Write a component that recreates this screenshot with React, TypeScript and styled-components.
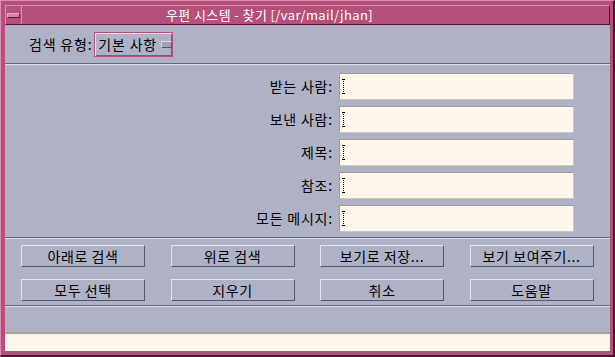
import styled, { createGlobalStyle } from "styled-components";

const Global = createGlobalStyle`
  html, body { margin: 0; padding: 0; background: #ffffff; }
  * { box-sizing: border-box; }
`;

const font = `"Noto Sans CJK KR", "DejaVu Sans", sans-serif`;

const Frame = styled.div`
  width: 615px;
  height: 357px;
  display: flex;
  flex-direction: column;
  background: #b4507a;
  border-top: 1px solid #e08cb0;
  border-left: 1px solid #e08cb0;
  border-right: 2px solid #4e1632;
  border-bottom: 2px solid #4e1632;
  padding: 4px 3px 3px 4px;
  font-family: ${font};
`;

const TitleBar = styled.div`
  height: 20px;
  display: flex;
  align-items: stretch;
  border-top: 1px solid #e08cb0;
  border-left: 1px solid #e08cb0;
  border-right: 1px solid #4e1632;
  border-bottom: 1px solid #4e1632;
`;

const MenuButton = styled.div`
  width: 16px;
  display: flex;
  align-items: center;
  justify-content: center;
  border-right: 1px solid #e08cb0;
  &::before {
    content: "";
    width: 11px;
    height: 3px;
    background: #d9809f;
    border: 1px solid #e8a9c2;
    border-right-color: #5a1e3a;
    border-bottom-color: #5a1e3a;
  }
`;

const Title = styled.div`
  flex: 1;
  color: #ffffff;
  font-size: 13px;
  letter-spacing: 0.4px;
  line-height: 18px;
  text-align: center;
  padding-right: 92px;
  white-space: nowrap;
`;

const Body = styled.div`
  flex: 1;
  display: flex;
  flex-direction: column;
  background: #aeb2c4;
  color: #000000;
  font-size: 14px;
  letter-spacing: 0.8px;
  white-space: nowrap;
`;

const Separator = styled.div`
  height: 2px;
  border-top: 1px solid #666a78;
  border-bottom: 1px solid #dcdee6;
`;

const TypeRow = styled.div`
  height: 38px;
  display: flex;
  align-items: center;
  padding-left: 24px;
  gap: 2px;
`;

const OptionMenu = styled.div`
  width: 79px;
  height: 25px;
  display: flex;
  align-items: center;
  gap: 4px;
  padding-left: 3px;
  border: 1px solid #b4507a;
  box-shadow: inset 1px 1px 0 #e4e6ee, inset -1px -1px 0 #666a78;
  &::after {
    content: "";
    width: 10px;
    height: 5px;
    background: #9ea2b4;
    border: 1px solid #dcdee6;
    border-right-color: #555866;
    border-bottom-color: #555866;
  }
`;

const Form = styled.div`
  display: grid;
  grid-template-columns: 328px 235px;
  column-gap: 6px;
  row-gap: 6px;
  padding: 8px 0 5px 0;
`;

const Label = styled.div`
  text-align: right;
  line-height: 27px;
`;

const Field = styled.div`
  height: 27px;
  background: #fff7ec;
  border: 1px solid #9c9c98;
  border-right-color: #c8c8c2;
  border-bottom-color: #c8c8c2;
  display: flex;
  align-items: center;
  padding-left: 3px;
`;

const Caret = styled.div`
  width: 3px;
  height: 15px;
  border-left: 1px dotted #000;
  position: relative;
  &::before, &::after {
    content: "";
    position: absolute;
    left: -2px;
    width: 3px;
    border-top: 1px dotted #000;
  }
  &::before { top: 0; }
  &::after { bottom: 0; }
`;

const Buttons = styled.div`
  display: grid;
  grid-template-columns: repeat(4, 124px);
  column-gap: 25.5px;
  row-gap: 12px;
  padding: 6px 0 4px 16px;
`;

const Button = styled.div`
  height: 22px;
  display: flex;
  align-items: center;
  justify-content: center;
  border: 1px solid #e4e6ee;
  border-right-color: #555866;
  border-bottom-color: #555866;
  letter-spacing: 0.6px;
`;

const StatusArea = styled.div`
  flex: 1;
`;

const Footer = styled.div`
  height: 19px;
  background: #fff7ec;
  border-top: 2px solid #a8a498;
  margin-bottom: 1px;
`;

const fields = ["받는 사람:", "보낸 사람:", "제목:", "참조:", "모든 메시지:"];
const buttons = [
  "아래로 검색",
  "위로 검색",
  "보기로 저장...",
  "보기 보여주기...",
  "모두 선택",
  "지우기",
  "취소",
  "도움말",
];

export default function App() {
  return (
    <>
      <Global />
      <Frame>
        <TitleBar>
          <MenuButton />
          <Title>우편 시스템 - 찾기 [/var/mail/jhan]</Title>
        </TitleBar>
        <Body>
          <TypeRow>
            <span>검색 유형:</span>
            <OptionMenu>기본 사항</OptionMenu>
          </TypeRow>
          <Separator />
          <Form>
            {fields.map((f) => (
              <>
                <Label key={f}>{f}</Label>
                <Field key={f + "-f"}>
                  <Caret />
                </Field>
              </>
            ))}
          </Form>
          <Separator />
          <Buttons>
            {buttons.map((b) => (
              <Button key={b}>{b}</Button>
            ))}
          </Buttons>
          <Separator />
          <StatusArea />
        </Body>
        <Footer />
      </Frame>
    </>
  );
}
